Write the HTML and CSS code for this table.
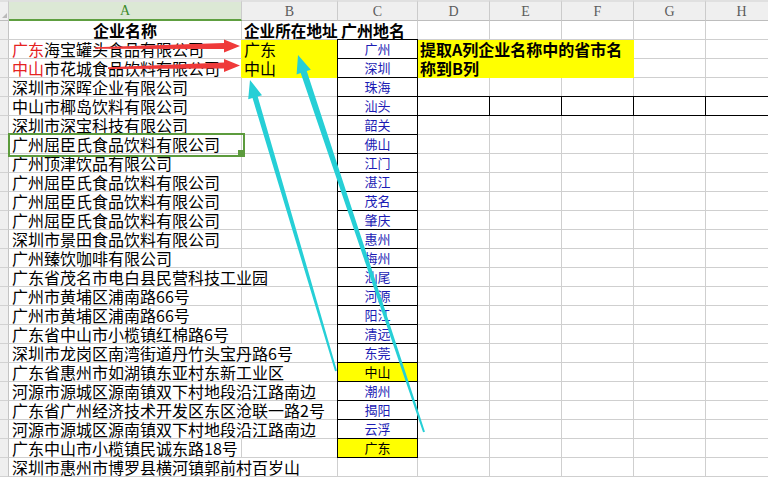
FILE: index.html
```html
<!DOCTYPE html>
<html lang="zh-CN">
<head>
<meta charset="utf-8">
<title>提取省市名</title>
<link rel="stylesheet" href="styles.css">
</head>
<body>
<div class="sheet">
  <div class="hdr corner"><span class="tri"></span></div>
  <div class="hdr on">A</div>
  <div class="hdr">B</div>
  <div class="hdr">C</div>
  <div class="hdr">D</div>
  <div class="hdr">E</div>
  <div class="hdr">F</div>
  <div class="hdr">G</div>
  <div class="hdr">H</div>

  <!-- row 1 -->
  <div class="rh"></div>
  <div class="c a title ctr">企业名称</div>
  <div class="c b title tb nob">企业所在地址</div>
  <div class="c title">广州地名</div>
  <div class="c"></div><div class="c"></div><div class="c"></div><div class="c"></div><div class="c"></div>

  <!-- row 2 -->
  <div class="rh"></div>
  <div class="c a yr"><span class="red">广东</span>海宝罐头食品有限公司</div>
  <div class="c b yl">广东</div>
  <div class="c city bx">广州</div>
  <div class="c note">提取A列企业名称中的省市名<br>称到B列</div>
  <div class="c"></div><div class="c"></div>

  <!-- row 3 -->
  <div class="rh"></div>
  <div class="c a yr"><span class="red">中山</span>市花城食品饮料有限公司</div>
  <div class="c b yl">中山</div>
  <div class="c city bx">深圳</div>
  <div class="c"></div><div class="c"></div>

  <!-- row 4 -->
  <div class="rh"></div>
  <div class="c a">深圳市深晖企业有限公司</div>
  <div class="c"></div>
  <div class="c city bx">珠海</div>
  <div class="c"></div><div class="c"></div><div class="c"></div><div class="c"></div><div class="c"></div>

  <!-- row 5 -->
  <div class="rh"></div>
  <div class="c a">中山市椰岛饮料有限公司</div>
  <div class="c"></div>
  <div class="c city bx">汕头</div>
  <div class="c bx"></div><div class="c bx"></div><div class="c bx"></div><div class="c bx"></div><div class="c bx"></div>

  <!-- row 6 -->
  <div class="rh"></div>
  <div class="c a">深圳市深宝科技有限公司</div>
  <div class="c"></div>
  <div class="c city bx">韶关</div>
  <div class="c"></div><div class="c"></div><div class="c"></div><div class="c"></div><div class="c"></div>

  <!-- row 7 -->
  <div class="rh"></div>
  <div class="c a selected">广州屈臣氏食品饮料有限公司<span class="handle"></span></div>
  <div class="c"></div>
  <div class="c city bx">佛山</div>
  <div class="c"></div><div class="c"></div><div class="c"></div><div class="c"></div><div class="c"></div>

  <!-- row 8 -->
  <div class="rh"></div>
  <div class="c a">广州顶津饮品有限公司</div>
  <div class="c"></div>
  <div class="c city bx">江门</div>
  <div class="c"></div><div class="c"></div><div class="c"></div><div class="c"></div><div class="c"></div>

  <!-- row 9 -->
  <div class="rh"></div>
  <div class="c a">广州屈臣氏食品饮料有限公司</div>
  <div class="c"></div>
  <div class="c city bx">湛江</div>
  <div class="c"></div><div class="c"></div><div class="c"></div><div class="c"></div><div class="c"></div>

  <!-- row 10 -->
  <div class="rh"></div>
  <div class="c a">广州屈臣氏食品饮料有限公司</div>
  <div class="c"></div>
  <div class="c city bx">茂名</div>
  <div class="c"></div><div class="c"></div><div class="c"></div><div class="c"></div><div class="c"></div>

  <!-- row 11 -->
  <div class="rh"></div>
  <div class="c a">广州屈臣氏食品饮料有限公司</div>
  <div class="c"></div>
  <div class="c city bx">肇庆</div>
  <div class="c"></div><div class="c"></div><div class="c"></div><div class="c"></div><div class="c"></div>

  <!-- row 12 -->
  <div class="rh"></div>
  <div class="c a">深圳市景田食品饮料有限公司</div>
  <div class="c"></div>
  <div class="c city bx">惠州</div>
  <div class="c"></div><div class="c"></div><div class="c"></div><div class="c"></div><div class="c"></div>

  <!-- row 13 -->
  <div class="rh"></div>
  <div class="c a">广州臻饮咖啡有限公司</div>
  <div class="c"></div>
  <div class="c city bx">梅州</div>
  <div class="c"></div><div class="c"></div><div class="c"></div><div class="c"></div><div class="c"></div>

  <!-- row 14 -->
  <div class="rh"></div>
  <div class="c a ov">广东省茂名市电白县民营科技工业园</div>
  <div class="c"></div>
  <div class="c city bx">汕尾</div>
  <div class="c"></div><div class="c"></div><div class="c"></div><div class="c"></div><div class="c"></div>

  <!-- row 15 -->
  <div class="rh"></div>
  <div class="c a">广州市黄埔区浦南路66号</div>
  <div class="c"></div>
  <div class="c city bx">河源</div>
  <div class="c"></div><div class="c"></div><div class="c"></div><div class="c"></div><div class="c"></div>

  <!-- row 16 -->
  <div class="rh"></div>
  <div class="c a">广州市黄埔区浦南路66号</div>
  <div class="c"></div>
  <div class="c city bx">阳江</div>
  <div class="c"></div><div class="c"></div><div class="c"></div><div class="c"></div><div class="c"></div>

  <!-- row 17 -->
  <div class="rh"></div>
  <div class="c a">广东省中山市小榄镇红棉路6号</div>
  <div class="c"></div>
  <div class="c city bx">清远</div>
  <div class="c"></div><div class="c"></div><div class="c"></div><div class="c"></div><div class="c"></div>

  <!-- row 18 -->
  <div class="rh"></div>
  <div class="c a ov">深圳市龙岗区南湾街道丹竹头宝丹路6号</div>
  <div class="c"></div>
  <div class="c city bx">东莞</div>
  <div class="c"></div><div class="c"></div><div class="c"></div><div class="c"></div><div class="c"></div>

  <!-- row 19 -->
  <div class="rh"></div>
  <div class="c a ov">广东省惠州市如湖镇东亚村东新工业区</div>
  <div class="c"></div>
  <div class="c city bx hl">中山</div>
  <div class="c"></div><div class="c"></div><div class="c"></div><div class="c"></div><div class="c"></div>

  <!-- row 20 -->
  <div class="rh"></div>
  <div class="c a ov">河源市源城区源南镇双下村地段沿江路南边</div>
  <div class="c"></div>
  <div class="c city bx">潮州</div>
  <div class="c"></div><div class="c"></div><div class="c"></div><div class="c"></div><div class="c"></div>

  <!-- row 21 -->
  <div class="rh"></div>
  <div class="c a ov">广东省广州经济技术开发区东区沧联一路2号</div>
  <div class="c"></div>
  <div class="c city bx">揭阳</div>
  <div class="c"></div><div class="c"></div><div class="c"></div><div class="c"></div><div class="c"></div>

  <!-- row 22 -->
  <div class="rh"></div>
  <div class="c a ov">河源市源城区源南镇双下村地段沿江路南边</div>
  <div class="c"></div>
  <div class="c city bx">云浮</div>
  <div class="c"></div><div class="c"></div><div class="c"></div><div class="c"></div><div class="c"></div>

  <!-- row 23 -->
  <div class="rh"></div>
  <div class="c a">广东中山市小榄镇民诚东路18号</div>
  <div class="c"></div>
  <div class="c city bx hl">广东</div>
  <div class="c"></div><div class="c"></div><div class="c"></div><div class="c"></div><div class="c"></div>

  <!-- row 24 -->
  <div class="rh"></div>
  <div class="c a ov">深圳市惠州市博罗县横河镇郭前村百岁山</div>
  <div class="c"></div>
  <div class="c"></div>
  <div class="c"></div><div class="c"></div><div class="c"></div><div class="c"></div><div class="c"></div>
</div>

<svg class="arrows" width="768" height="477" viewBox="0 0 768 477" xmlns="http://www.w3.org/2000/svg">
  <polygon fill="#ef3a3a" points="95,47.2 224,43 224,39.6 240,46 224,52.4 224,49 95,48.8"/>
  <polygon fill="#ef3a3a" points="108,67.2 224,62.5 224,58.9 240,65.5 224,72.1 224,68.5 108,69"/>
  <polygon fill="#26cfd6" points="250,80 262.01,95.22 257.69,96.49 336.96,370.72 335.04,371.28 252.51,98.03 248.19,99.30"/>
  <polygon fill="#26cfd6" points="298,55 310.82,69.69 306.74,71.06 424.95,431.68 423.05,432.32 300.68,73.08 296.60,74.45"/>
</svg>
</body>
</html>
```
FILE: styles.css
```css
* { box-sizing: border-box; }

html, body {
  margin: 0;
  padding: 0;
  background: #ffffff;
  overflow: hidden;
}

body {
  width: 768px;
  height: 477px;
  position: relative;
  font-family: "Noto Sans CJK SC", "Noto Sans", sans-serif;
  color: #000;
}

.sheet {
  display: grid;
  grid-template-columns: 9px 233px 96px 80px repeat(5, 72px);
  grid-template-rows: 21px;
  grid-auto-rows: 19px;
  width: 778px;
}

/* column header */
.hdr {
  background: #efefef;
  border-top: 2px solid #e0e0e0;
  border-right: 1px solid #cbcbcb;
  border-bottom: 1px solid #bdbdbd;
  font-family: "Liberation Serif", serif;
  font-size: 14px;
  line-height: 16px;
  color: #5c5c5c;
  display: flex;
  align-items: center;
  justify-content: center;
  padding-top: 1px;
}

.hdr.on {
  background: #dce8d5;
  color: #3d8a2a;
  border-bottom: 2px solid #5e9f40;
}

.corner {
  position: relative;
}

.tri {
  position: absolute;
  right: 1px;
  bottom: 2px;
  width: 0;
  height: 0;
  border-left: 5px solid transparent;
  border-bottom: 5px solid #b9b9b9;
}

/* row header strip */
.rh {
  background: #efefef;
  border-right: 1px solid #c4c4c4;
  border-bottom: 1px solid #d2d2d2;
}

/* cells */
.c {
  border-right: 1px solid #cfcfcf;
  border-bottom: 1px solid #cfcfcf;
  font-size: 16px;
  line-height: 18px;
  white-space: nowrap;
  overflow: visible;
  padding-left: 3px;
}

.a.ov { border-right-color: transparent; }
.a.yr { border-right-color: #ffff00; }

.title { font-weight: bold; }
.ctr { text-align: center; padding-left: 0; }
.tb { font-size: 15.6px; padding-left: 2px; }
.nob { border-right-color: transparent; }

.red { color: #e5221f; }

.yl {
  background: #ffff00;
  border-right-color: #000;
  border-bottom-color: #ffff00;
  padding-left: 2px;
}

.city {
  font-size: 13px;
  color: #1c1cb4;
  text-align: center;
  padding-left: 0;
}

.bx {
  border-right-color: #000;
  border-bottom-color: #000;
  box-shadow: -1px 0 0 #000, 0 -1px 0 #000, -1px -1px 0 #000;
}

.hl {
  background: #ffff00;
  color: #000;
}

.note {
  grid-column: span 3;
  grid-row: span 2;
  background: #ffff00;
  border-right-color: #ffff00;
  border-bottom-color: #ffff00;
  font-weight: bold;
  font-size: 16px;
  line-height: 19px;
  padding-left: 2px;
  white-space: normal;
}

/* active cell */
.selected {
  position: relative;
}

.selected::after {
  content: "";
  position: absolute;
  left: -1px;
  top: -2px;
  width: 233px;
  height: 20px;
  border: 2px solid #5c9b3d;
}

.handle {
  position: absolute;
  left: 229px;
  top: 15px;
  width: 5px;
  height: 5px;
  background: #5c9b3d;
  z-index: 1;
}

.arrows {
  position: absolute;
  left: 0;
  top: 0;
  pointer-events: none;
}
```
